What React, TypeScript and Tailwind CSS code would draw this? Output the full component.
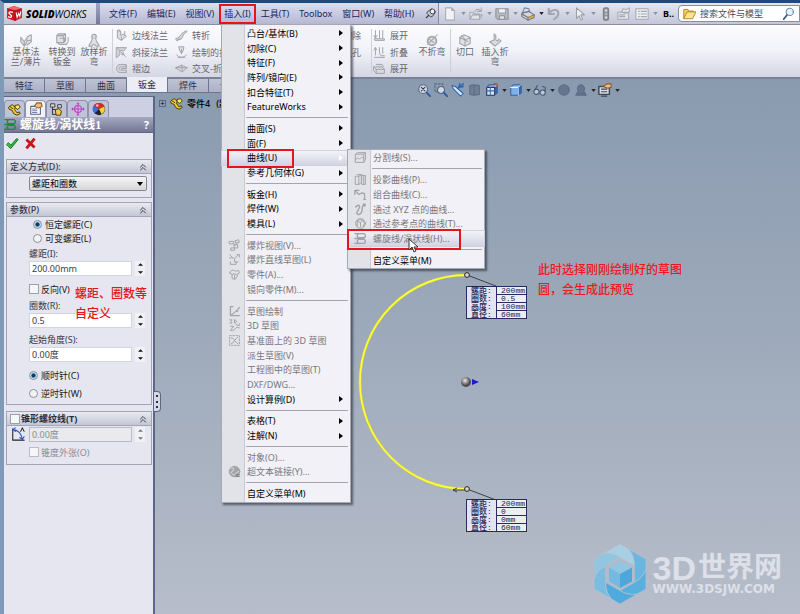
import type { ReactNode } from "react";
import clsx from "clsx";

type MenuEntry = {
  label?: string;
  arrow?: boolean;
  disabled?: boolean;
  active?: boolean;
  icon?: ReactNode;
};

const Glyph = ({ children, className }: { children: ReactNode; className?: string }) => (
  <svg
    viewBox="0 0 16 16"
    aria-hidden="true"
    className={clsx("shrink-0", className ?? "size-[13px]")}
    fill="none"
    stroke="currentColor"
    strokeWidth="1.2"
    strokeLinecap="round"
    strokeLinejoin="round"
  >
    {children}
  </svg>
);

/* ---------- ribbon glyphs ---------- */

const BaseFlange = () => (
  <Glyph className="size-[14px]">
    <path d="M2 5l4 5v5L2 10zM6 10l4-6v5l-4 6" fill="#dcdde2" />
    <path d="M10 4l4-2v8l-5 4M9 9l5-1" fill="#e6e7eb" />
  </Glyph>
);
const ConvertMetal = () => (
  <Glyph className="size-[14px]">
    <path d="M2 3h8v8H2zM2 3l2-2h8l-2 2M12 1v8l-2 2" fill="#e0e1e6" />
    <path d="M5 13h8l2-3v-5M5 13l-2-2M6 6h5v4" />
  </Glyph>
);
const LoftBend = () => (
  <Glyph className="size-[14px]">
    <circle cx="8" cy="4" r="2.6" fill="#d8d9de" />
    <path d="M6 6c0 4-2 4-4 9h4c1-3 3-3 4 0h4c-2-5-4-5-4-9" fill="#e0e1e6" />
  </Glyph>
);
const EdgeFlange = () => (
  <Glyph>
    <path d="M3 2v9l5 3 6-5-4-3-3 2V4z" fill="#dddee3" />
    <path d="M3 2l3-1 1 3M8 14v-4M12 3v5" />
  </Glyph>
);
const MiterFlange = () => (
  <Glyph>
    <path d="M2 2h12l-3 4H6v5l-4 3z" fill="#d2d4da" />
    <path d="M2 2l4 4M8 8l5 5M10 8v3M8 10h3" />
  </Glyph>
);
const Hem = () => (
  <Glyph>
    <path d="M13 3H7a5 5 0 0 0 0 10h7v-3H7a2 2 0 0 1 0-4h6z" fill="#d6d8dd" />
    <path d="M13 3l1 2v2M8 8h6" />
  </Glyph>
);
const Jog = () => (
  <Glyph>
    <path d="M1 12l4-2 4-5 5-3 1 1-4 3-3 6-5 2z" fill="#d9dade" />
    <path d="M2 14l4-2" />
  </Glyph>
);
const SketchBend = () => (
  <Glyph>
    <path d="M5 1h6l-1 5-2 3-2-3zM8 4v5" fill="#dfe0e5" />
    <path d="M2 11c3 4 9 4 12 0M4 14h8" />
  </Glyph>
);
const CrossBreak = () => (
  <Glyph>
    <path d="M1 7l7-3 7 3-6 5zM1 7h14M8 4l1 8" fill="#d9dade" />
  </Glyph>
);
const Unfold = () => (
  <Glyph>
    <path d="M3 2v8M1 8l2 3 2-3M8 2v9M12 2v9M7 12h7v2H2v-2z" fill="#e0e1e6" />
  </Glyph>
);
const Fold = () => (
  <Glyph>
    <path d="M3 11V2M1 5l2-3 2 3M8 2v7l2 3h4M12 2v7M2 14h12" />
  </Glyph>
);
const Flatten = () => (
  <Glyph>
    <path d="M1 6h10l3 3v5H4l-3-3zM1 6l3 3h10M4 9v5M4 3h7l2 3" fill="#d9dade" />
  </Glyph>
);
const NoBends = () => (
  <Glyph className="size-[14px]">
    <circle cx="8" cy="9" r="5" fill="#dfe0e5" strokeWidth="2" />
    <path d="M3 13L14 2M5 7l5 4" />
  </Glyph>
);
const Rip = () => (
  <Glyph className="size-[14px]">
    <path d="M2 5l5-3 7 3v7l-6 3-6-3zM2 5l6 3 6-3M8 8v7M4 3l7 7" fill="#dfe0e5" />
  </Glyph>
);
const InsertBends = () => (
  <Glyph className="size-[14px]">
    <path d="M7 1v7l-5 2 6 5 7-6-3-2c0 3-4 2-3-1V3z" fill="#d9dade" />
  </Glyph>
);

/* ---------- menu glyphs ---------- */

const ExplodeView = () => (
  <Glyph>
    <path d="M2 3h5v3H2zM9 2l4-1 1 3-4 1zM8 7h4v4H8zM4 11h4v3H4zM7 6l2 2M11 5v2" />
  </Glyph>
);
const ExplodeLine = () => (
  <Glyph>
    <path d="M2 2l4 4M2 6h4M8 7l5-5M11 2h3v3M8 7v4h4M4 14h6v-3M3 11v3" />
  </Glyph>
);
const PartIcon = () => (
  <Glyph>
    <path d="M2 6c1-4 5-4 7-2l4-1 1 3-3 2M2 6l3 2v5l4 1 3-5-4-2-3 1M8 9v4" />
  </Glyph>
);
const SketchIcon = () => (
  <Glyph>
    <path d="M3 2v11h11M3 2h3M3 13c3-1 4-4 8-6l3-4M10 7l2 1" strokeWidth="1.5" />
  </Glyph>
);
const Sketch3D = () => (
  <Glyph>
    <path d="M2 1h3L4 3l1 2H2M8 1v4h1q3-2 0-4zM3 9h4l-4 5h4l4-4 3 1M10 7l4 1v-2" />
  </Glyph>
);
const PlaneSketch = () => (
  <Glyph>
    <path d="M2 2h12v12H2z" strokeDasharray="2 2" />
    <path d="M4 5c3 0 5 2 3 5M12 4L8 8l4 4M4 12l3-2" />
  </Glyph>
);
const SplitLine = () => (
  <Glyph>
    <path d="M2 4l2-2h10v9l-2 3H2zM2 4h10v10M12 4l2-2M2 11c3-6 4 1 6-2s3 0 4 0" />
  </Glyph>
);
const ProjectCurve = () => (
  <Glyph>
    <path d="M2 4h4v10H2zM6 4l3-2v10l-3 2M10 3h4v11h-4zM4 2h5M12 3v11" />
  </Glyph>
);
const CompositeCurve = () => (
  <Glyph>
    <path d="M1 3v5M1 3h5M1 3l5 5 4-2 3 1v6M10 6l3 1M12 14h2" strokeWidth="1.5" />
  </Glyph>
);
const XyzCurve = () => (
  <Glyph>
    <path d="M2 5c3-4 6-2 4 2s-4 6-1 7 5-3 5-6 0-6 4-6M12 1l2 1-1 2" strokeWidth="1.7" />
  </Glyph>
);
const RefPointCurve = () => (
  <Glyph>
    <circle cx="8" cy="8" r="6" />
    <path d="M4 5l3-2 4 1 2 4-2 4M4 5v6M8 7v5M4 5l4 2 3-3" />
  </Glyph>
);
const HelixIcon = ({ className }: { className?: string }) => (
  <Glyph className={className}>
    <rect x="4" y="2" width="10" height="5" rx="2.5" strokeWidth="1.6" />
    <rect x="4" y="9" width="10" height="5" rx="2.5" strokeWidth="1.6" />
    <path d="M1 2h4M1 8h11M1 14h4" strokeWidth="1.6" />
  </Glyph>
);
const GlobeIcon = () => (
  <Glyph>
    <circle cx="8" cy="8" r="6.5" fill="#a4a4a8" />
    <path d="M4 4c4-2 4 3 1 4s1 4 3 4 2-4 5-4" stroke="#e3e3e8" />
    <path d="M10 12h4M10 14h4" stroke="#777" />
  </Glyph>
);

const SEP: MenuEntry = {};

const insertMenu: MenuEntry[] = [
  { label: "凸台/基体(B)", arrow: true },
  { label: "切除(C)", arrow: true },
  { label: "特征(F)", arrow: true },
  { label: "阵列/镜向(E)", arrow: true },
  { label: "扣合特征(T)", arrow: true },
  { label: "FeatureWorks", arrow: true },
  SEP,
  { label: "曲面(S)", arrow: true },
  { label: "面(F)", arrow: true },
  { label: "曲线(U)", arrow: true, active: true },
  { label: "参考几何体(G)", arrow: true },
  SEP,
  { label: "钣金(H)", arrow: true },
  { label: "焊件(W)", arrow: true },
  { label: "模具(L)", arrow: true },
  SEP,
  { label: "爆炸视图(V)...", disabled: true, icon: <ExplodeView /> },
  { label: "爆炸直线草图(L)", disabled: true, icon: <ExplodeLine /> },
  { label: "零件(A)...", disabled: true, icon: <PartIcon /> },
  { label: "镜向零件(M)...", disabled: true },
  SEP,
  { label: "草图绘制", disabled: true, icon: <SketchIcon /> },
  { label: "3D 草图", disabled: true, icon: <Sketch3D /> },
  { label: "基准面上的 3D 草图", disabled: true, icon: <PlaneSketch /> },
  { label: "派生草图(V)", disabled: true },
  { label: "工程图中的草图(T)", disabled: true },
  { label: "DXF/DWG...", disabled: true },
  { label: "设计算例(D)", arrow: true },
  SEP,
  { label: "表格(T)", arrow: true },
  { label: "注解(N)", arrow: true },
  SEP,
  { label: "对象(O)...", disabled: true },
  { label: "超文本链接(Y)...", disabled: true, icon: <GlobeIcon /> },
  SEP,
  { label: "自定义菜单(M)" },
];

const curveMenu: MenuEntry[] = [
  { label: "分割线(S)...", disabled: true, icon: <SplitLine /> },
  SEP,
  { label: "投影曲线(P)...", disabled: true, icon: <ProjectCurve /> },
  { label: "组合曲线(C)...", disabled: true, icon: <CompositeCurve /> },
  { label: "通过 XYZ 点的曲线...", disabled: true, icon: <XyzCurve /> },
  { label: "通过参考点的曲线(T)...", disabled: true, icon: <RefPointCurve /> },
  { label: "螺旋线/涡状线(H)...", disabled: true, active: true, icon: <HelixIcon /> },
  SEP,
  { label: "自定义菜单(M)" },
];

const Menu = ({ items, className }: { items: MenuEntry[]; className: string }) => (
  <div
    role="menu"
    className={clsx(
      "absolute z-20 flex flex-col border border-[#a9a9b0] bg-[linear-gradient(90deg,#e1e3e9_22px,#c9cad0_22px,#c9cad0_23px,#f2f1f7_23px)] shadow-[2px_2px_2px_rgba(40,45,60,0.65)]",
      className
    )}
  >
    {items.map((item, i) =>
      item.label ? (
        <button
          key={i}
          role="menuitem"
          className={clsx(
            "flex min-h-0 flex-1 items-center text-left whitespace-nowrap",
            item.disabled ? "text-[#77777c]" : "text-black",
            item.active && "bg-linear-to-b from-[#f3f3f8] to-[#d3d4e2] outline outline-[#cfd0dc]"
          )}
        >
          <span className="flex w-[24px] shrink-0 justify-center text-[#a2a3a8]">{item.icon}</span>
          <span className="flex-1 pl-px">{item.label}</span>
          {item.arrow && (
            <svg viewBox="0 0 4 6" className="mr-[7px] h-1.5 w-1" aria-hidden="true">
              <path d="M0 0l4 3-4 3z" fill={item.active ? "#fff" : "#000"} />
            </svg>
          )}
        </button>
      ) : (
        <div key={i} role="separator" className="flex h-[7px] shrink-0 items-center pr-0.5 pl-[24px]">
          <span className="h-px flex-1 bg-[#a5a5aa]" />
        </div>
      )
    )}
  </div>
);

/* ---------- title bar ---------- */

const Caret = ({ dark }: { dark?: boolean }) => (
  <svg viewBox="0 0 6 4" className="h-[3px] w-[5px] shrink-0" aria-hidden="true">
    <path d="M0 0h6L3 4z" fill={dark ? "#26262c" : "#8d8f99"} />
  </svg>
);

const quickTools: { name: string; caret?: boolean; dark?: boolean; icon: ReactNode }[] = [
  { name: "新建", caret: true, icon: <path d="M3 1h7l3 3v11H3zM10 1v3h3" fill="#f2f2f6" stroke="#a9abb5" /> },
  {
    name: "打开",
    caret: true,
    icon: (
      <>
        <path d="M1 14V6h4l1 2h6v6zM1 14l3-5h11l-3 5z" fill="#e2e3ea" stroke="#a5a7b1" />
        <path d="M7 5c1-3 4-3 6-1M14 1v4h-4" stroke="#a5a7b1" />
      </>
    ),
  },
  {
    name: "保存",
    caret: true,
    icon: (
      <>
        <path d="M1 2h14v12H3l-2-2z" fill="#b9bbc4" stroke="#8d8f99" />
        <path d="M4 2h8v5H4z" fill="#f0f0f4" stroke="#9fa1ab" />
        <path d="M5 10h6v4H5z" fill="#e1e2e8" stroke="#8d8f99" />
      </>
    ),
  },
  {
    name: "打印",
    caret: true,
    dark: true,
    icon: (
      <>
        <path d="M2 6l2-5 5 1 1 4" fill="#cfe3fa" stroke="#7387a5" />
        <path d="M1 7l8-2 6 4v3l-7 3-7-4z" fill="#d6d6db" stroke="#6d6e76" />
        <path d="M1 8l7 4 7-3M8 12v3" stroke="#6d6e76" />
        <path d="M10 12l3-1" stroke="#d9a622" strokeWidth="2" />
      </>
    ),
  },
  {
    name: "撤消",
    caret: true,
    icon: <path d="M2 2v6h6M2 8c3-6 11-6 11-1 0 3-2 5-5 7" stroke="#a3a5b0" strokeWidth="2.4" />,
  },
  {
    name: "选择",
    caret: true,
    icon: <path d="M4 1v12l3-3 2 5 2-1-2-5h4z" fill="#f1f1f5" stroke="#9c9ea8" />,
  },
  {
    name: "重建模型",
    icon: (
      <>
        <rect x="5" y="1" width="6" height="14" rx="2" fill="#909199" stroke="#7c7d85" />
        <circle cx="8" cy="4" r="1.5" fill="#d6d7dc" stroke="none" />
        <circle cx="8" cy="8" r="1.5" fill="#b6b7bd" stroke="none" />
        <circle cx="8" cy="12" r="1.5" fill="#d6d7dc" stroke="none" />
      </>
    ),
  },
  {
    name: "文件属性",
    icon: <path d="M1 6h12v8H1zM5 6l2-4 3 1 4-2v5l-4 1zM3 9h6M3 11h6" fill="#e6e7ec" stroke="#a5a7b1" />,
  },
  {
    name: "选项",
    caret: true,
    icon: <path d="M1 2h14v12H1zM4 5h1M4 8h1M4 11h1M7 5h6M7 8h6M7 11h6" fill="#eeeef3" stroke="#a5a7b1" />,
  },
];

const TitleBar = () => (
  <header className="flex h-[22px] shrink-0 items-stretch overflow-hidden border-b border-[#8a8ca0] bg-linear-to-b from-[#e4e6ef] to-[#c3c6d8]">
    <div className="flex w-[92px] shrink-0 items-center gap-[3px] pl-0.5">
      <svg viewBox="0 0 32 32" className="size-[17px] shrink-0" aria-hidden="true">
        <path d="M2 7l13-5 15 5v17l-13 6-15-5z" fill="#cf1820" />
        <path d="M2 7l13-5 15 5-13 4z" fill="#f0685f" />
        <path d="M17 11v19M2 7l15 4 13-4" stroke="#8d0b12" strokeWidth="1.5" fill="none" />
        <path d="M13 14c-8-3-9 1-5 4s3 7-4 4" stroke="#fff" strokeWidth="2.5" fill="none" />
        <path d="M19 14l2 9 3-7 2 5 2-9" stroke="#fff" strokeWidth="2" fill="none" />
      </svg>
      <span className="font-['Open_Sans','Noto_Sans',sans-serif] text-[10px] text-black italic">
        <b className="font-extrabold">SOLID</b>
        <span className="font-medium">WORKS</span>
      </span>
    </div>
    <div className="w-1 shrink-0 bg-linear-to-b from-[#a3a6c2] to-[#74779a]" />
    <nav className="flex w-[339px] shrink-0 items-center border-r border-[#8a8ca0] bg-linear-to-b from-[#dcdeef] to-[#b4b8d2] pl-1 text-[#1d1f5c]">
      {["文件(F)", "编辑(E)", "视图(V)", "插入(I)", "工具(T)", "Toolbox", "窗口(W)", "帮助(H)"].map((name) => (
        <button
          key={name}
          className={clsx(
            "mx-px h-[18px] px-1 whitespace-nowrap",
            name === "插入(I)" && "outline-2 -outline-offset-1 outline-[#e5141e]"
          )}
        >
          {name}
        </button>
      ))}
      <button aria-label="固定" className="ml-1.5">
        <Glyph className="size-[11px]">
          <path d="M2 14l4-4" stroke="#33343c" strokeWidth="2" />
          <path d="M3 8l5 5 3-1 4-6-5-5-6 4z" fill="#c2c4ce" stroke="#33343c" />
          <circle cx="11" cy="5" r="3.5" fill="#f1f1f5" stroke="#33343c" />
        </Glyph>
      </button>
    </nav>
    <div className="flex min-w-0 flex-1 items-center pl-1">
      {quickTools.map((tool) => (
        <button
          key={tool.name}
          aria-label={tool.name}
          className={clsx("flex shrink-0 items-center gap-1", tool.caret ? "w-[26px]" : "w-[18px]")}
        >
          <Glyph className="size-[14px]">{tool.icon}</Glyph>
          {tool.caret && <Caret dark={tool.dark} />}
        </button>
      ))}
      <span className="px-0.5 font-bold text-black">B..</span>
      <label className="ml-auto flex h-[17px] w-[122px] shrink-0 items-center gap-1 rounded-l-sm border border-[#8a8ca0] bg-white pr-1 pl-1">
        <Glyph className="size-[13px]">
          <path d="M1 14V3h5l1 2h6v3" fill="#f6d36a" stroke="#b8861b" />
          <path d="M1 14l4-8h11l-4 8z" fill="#fbe58e" stroke="#b8861b" />
        </Glyph>
        <input
          aria-label="搜索文件与模型"
          placeholder="搜索文件与模型"
          className="min-w-0 flex-1 bg-transparent outline-none placeholder:text-[#4c4d55]"
        />
        <Glyph className="size-[13px]">
          <circle cx="9.5" cy="6" r="4.5" fill="#e7f1fb" stroke="#5c7fae" />
          <path d="M6 10l-4 5" stroke="#39557f" strokeWidth="2" />
        </Glyph>
      </label>
    </div>
  </header>
);

/* ---------- ribbon ---------- */

const BigTool = ({ icon, label, className }: { icon: ReactNode; label: string; className: string }) => (
  <button className={clsx("flex shrink-0 flex-col items-center pt-2 text-[#66676e]", className)}>
    <span className="text-[#a2a3ab]">{icon}</span>
    <span className="text-center leading-[10px] whitespace-pre-line">{label}</span>
  </button>
);

const ToolColumn = ({ tools, className }: { tools: { label: string; icon?: ReactNode }[]; className: string }) => (
  <div className={clsx("flex shrink-0 flex-col pt-0.5", className)}>
    {tools.map((tool, i) => (
      <button key={i} className="flex h-[17px] items-center gap-1 whitespace-nowrap text-[#66676e]">
        <span className="w-[13px] text-[#a2a3ab]">{tool.icon}</span>
        {tool.label}
      </button>
    ))}
  </div>
);

const RibbonSeparator = () => <span className="mt-1 h-11 w-px shrink-0 bg-[#cdcfd9]" />;

const Ribbon = () => (
  <div className="flex h-[54px] shrink-0 overflow-hidden border-b-2 border-[#7b8196] bg-linear-to-b from-[#fcfcfe] via-[#f1f2f8] to-[#d4d6e3]">
    <BigTool className="w-11" icon={<BaseFlange />} label={"基体法\n兰/薄片"} />
    <BigTool className="w-7" icon={<ConvertMetal />} label={"转换到\n钣金"} />
    <BigTool className="w-9" icon={<LoftBend />} label={"放样折\n弯"} />
    <RibbonSeparator />
    <ToolColumn
      className="w-[62px] pl-0.5"
      tools={[
        { label: "边线法兰", icon: <EdgeFlange /> },
        { label: "斜接法兰", icon: <MiterFlange /> },
        { label: "褶边", icon: <Hem /> },
      ]}
    />
    <ToolColumn
      className="w-[133px]"
      tools={[
        { label: "转折", icon: <Jog /> },
        { label: "绘制的折弯", icon: <SketchBend /> },
        { label: "交叉-折断", icon: <CrossBreak /> },
      ]}
    />
    <ToolColumn className="w-[63px]" tools={[{ label: "拉伸切除" }, { label: "简单直孔" }]} />
    <RibbonSeparator />
    <ToolColumn
      className="w-[42px] pl-px"
      tools={[
        { label: "展开", icon: <Unfold /> },
        { label: "折叠", icon: <Fold /> },
        { label: "展开", icon: <Flatten /> },
      ]}
    />
    <BigTool className="w-9" icon={<NoBends />} label="不折弯" />
    <RibbonSeparator />
    <BigTool className="w-7" icon={<Rip />} label="切口" />
    <BigTool className="w-8" icon={<InsertBends />} label={"插入折\n弯"} />
  </div>
);

/* ---------- property panel ---------- */

const TreeParts = () => (
  <Glyph className="size-[13px]">
    <path d="M1 5l4-3 4 3-1 3 3 4 3-1 1 2-4 2-4-2-2-4-3-1z" fill="#f3cf27" stroke="#4d3d06" />
    <path d="M9 3l4-1 2 3-3 3-3-2z" fill="#fae86b" stroke="#4d3d06" />
    <path d="M3 5l3 2" stroke="#4d3d06" />
  </Glyph>
);

const panelTabs: { name: string; icon: ReactNode }[] = [
  { name: "设计树", icon: <TreeParts /> },
  {
    name: "属性",
    icon: (
      <Glyph className="size-[14px]">
        <path d="M2 5h11v9H2z" fill="#fff" stroke="#5a5f75" />
        <path d="M4 8h5M4 10h5M4 12h5" stroke="#7080b0" />
        <path d="M6 5l3-4h5l1 4-4 2z" fill="#f3bd7c" stroke="#8a5a24" />
      </Glyph>
    ),
  },
  {
    name: "配置",
    icon: (
      <Glyph className="size-[13px]">
        <path d="M3 1v13h4M3 8h3" stroke="#333" />
        <path d="M1 1h5v4H1zM10 2h4v4h-4z" fill="#d5d7e0" stroke="#444" />
        <path d="M7 8l4-1 3 3-1 5H8z" fill="#f0cf3e" stroke="#4d3d06" />
      </Glyph>
    ),
  },
  {
    name: "尺寸",
    icon: (
      <Glyph className="size-[14px]">
        <circle cx="8" cy="8" r="4" stroke="#c440c4" />
        <path d="M8 1v14M1 8h14M7 2l1-1 1 1M7 14l1 1 1-1M2 7L1 8l1 1M14 7l1 1-1 1" stroke="#c440c4" />
      </Glyph>
    ),
  },
  {
    name: "外观",
    icon: (
      <Glyph className="size-[14px]">
        <g stroke="none">
          <circle cx="8" cy="8" r="7" fill="#24242c" />
          <path d="M8 8L2 4a7 7 0 0 1 12 1z" fill="#e3262a" />
          <path d="M8 8l6-3a7 7 0 0 1-3 9z" fill="#f3d22c" />
          <path d="M8 8L2 4a7 7 0 0 0 1 9z" fill="#3f72d0" />
          <circle cx="6" cy="4" r="1.5" fill="#fff" opacity=".7" />
        </g>
      </Glyph>
    ),
  },
];

const Group = ({
  title,
  checkable,
  className,
  children,
}: {
  title: string;
  checkable?: boolean;
  className?: string;
  children: ReactNode;
}) => (
  <section className={clsx("mr-px ml-0.5 border border-[#a1a5b6]", className)}>
    <div className="flex h-[14px] items-center justify-between border-b border-[#a1a5b6] bg-linear-to-b from-[#e9eaf1] to-[#c3c6d4] pr-1 pl-[3px]">
      {checkable ? (
        <label className="flex items-center gap-px font-bold text-[#2b2d3c]">
          <input type="checkbox" className="size-[10px] appearance-none border border-[#9ea0aa] bg-[#f6f6f9]" />
          {title}
        </label>
      ) : (
        <h2 className="font-medium text-[#34364a]">{title}</h2>
      )}
      <button aria-label="折叠">
        <Glyph className="size-2">
          <path d="M3 8l5-5 5 5M3 14l5-5 5 5" stroke="#2b2d3c" strokeWidth="1.8" />
        </Glyph>
      </button>
    </div>
    {children}
  </section>
);

const Radio = ({
  name,
  label,
  checked,
  className,
}: {
  name: string;
  label: string;
  checked?: boolean;
  className?: string;
}) => (
  <label className={clsx("flex h-[14px] items-center gap-[3px] text-[#1a1a20]", className)}>
    <input
      type="radio"
      name={name}
      defaultChecked={checked}
      className="size-[9px] appearance-none rounded-full border border-[#8e9099] bg-[#f3f3f6] checked:bg-[radial-gradient(circle,#0d3e66_35%,#b9dcf3_50%)]"
    />
    {label}
  </label>
);

const Spin = ({ id, value, disabled }: { id: string; value: string; disabled?: boolean }) => (
  <div className="flex h-[15px] items-stretch gap-[3px]">
    <input
      id={id}
      aria-label={disabled ? "锥度" : undefined}
      defaultValue={value}
      disabled={disabled}
      className={clsx(
        "w-[103px] border px-0.5 outline-none",
        disabled
          ? "border-[#b9bbc6] bg-[#e9e9ee] text-[#8c8c92]"
          : "border-[#d3d5de] bg-white text-[#3c3d44]"
      )}
    />
    <span className="flex w-[10px] flex-col bg-[#f1f1f5]">
      <button aria-label="增加" className="flex flex-1 items-center justify-center">
        <svg viewBox="0 0 6 3" className="h-[3px] w-[5px]">
          <path d="M0 3h6L3 0z" fill={disabled ? "#77777c" : "#111"} />
        </svg>
      </button>
      <button aria-label="减少" className="flex flex-1 items-center justify-center">
        <svg viewBox="0 0 6 3" className="h-[3px] w-[5px]">
          <path d="M0 0h6L3 3z" fill={disabled ? "#77777c" : "#111"} />
        </svg>
      </button>
    </span>
  </div>
);

const PropertyPanel = () => (
  <aside className="relative mt-[3px] w-[151px] shrink-0 border-t border-r-2 border-[#5c6788] bg-[#e5e6f0]">
    <div className="flex h-5 items-end bg-[#cdd0e2] pt-[3px]">
      {panelTabs.map((tab, i) => (
        <button
          key={tab.name}
          aria-label={tab.name}
          className={clsx(
            "flex h-[17px] w-[21px] items-center justify-center rounded-t-sm border border-b-0 border-[#8e93ab]",
            i === 1 ? "bg-[#f1f2f8]" : "bg-[#bfc3d8]"
          )}
        >
          {tab.icon}
        </button>
      ))}
    </div>
    <div className="flex h-4 items-center gap-[3px] border-b border-[#62667f] bg-linear-to-b from-[#a7a9c1] to-[#737693] pr-1 text-white">
      <span className="text-[#149336]">
        <HelixIcon className="size-[13px]" />
      </span>
      <h1 className="flex-1 font-['Liberation_Serif','Noto_Sans_CJK_SC',serif] text-[12px] font-bold whitespace-nowrap">
        螺旋线/涡状线1
      </h1>
      <button aria-label="帮助" className="text-[11px] font-bold">
        ?
      </button>
    </div>
    <div className="flex h-[26px] items-start gap-[5px] pt-1 pl-0.5">
      <button aria-label="确定">
        <Glyph className="size-[13px]">
          <path d="M1 9l2-2 3 3 7-8 2 1-9 11z" fill="#39b54a" stroke="#15742a" />
        </Glyph>
      </button>
      <button aria-label="取消">
        <Glyph className="size-[13px]">
          <path d="M3 3l10 10M13 2L3 14" stroke="#c5161c" strokeWidth="3.5" strokeLinecap="butt" />
        </Glyph>
      </button>
    </div>

    <Group title="定义方式(D):" className="pb-[6px]">
      <div className="relative mt-0.5 mr-1 ml-[22px]">
        <select
          aria-label="定义方式"
          className="h-[15px] w-full appearance-none rounded-xs border border-[#85868e] bg-linear-to-b from-[#f6f6f6] to-[#d6d6d9] pl-0.5 text-black"
        >
          <option>螺距和圈数</option>
        </select>
        <svg viewBox="0 0 6 4" className="pointer-events-none absolute top-[6px] right-1 h-1 w-1.5">
          <path d="M0 0h6L3 4z" fill="#000" />
        </svg>
      </div>
    </Group>

    <Group title="参数(P)" className="mt-1">
      <div className="flex flex-col pb-1 pl-[22px] text-[#34364a]">
        <Radio name="pitch" label="恒定螺距(C)" checked className="pl-1" />
        <Radio name="pitch" label="可变螺距(L)" className="pl-1" />
        <label htmlFor="pitch-value" className="mt-0.5 leading-[14px]">
          螺距(I):
        </label>
        <Spin id="pitch-value" value="200.00mm" />
        <label className="mt-[5px] flex h-4 items-center gap-0.5 text-[#1a1a20]">
          <input type="checkbox" className="size-[10px] appearance-none border border-[#9ea0aa] bg-[#f6f6f9]" />
          反向(V)
        </label>
        <label htmlFor="turns" className="mt-0.5 leading-[14px]">
          圈数(R):
        </label>
        <Spin id="turns" value="0.5" />
        <label htmlFor="start-angle" className="mt-[5px] leading-[14px]">
          起始角度(S):
        </label>
        <Spin id="start-angle" value="0.00度" />
        <Radio name="direction" label="顺时针(C)" checked className="mt-[6px]" />
        <Radio name="direction" label="逆时针(W)" className="mt-1" />
      </div>
    </Group>

    <Group title="锥形螺纹线(T)" checkable className="mt-[6px]">
      <div className="flex gap-1 pt-px pb-1 pl-1">
        <Glyph className="size-[14px]">
          <path d="M2 15V2M2 15h13" stroke="#222" />
          <path d="M2 3c6 0 10 5 11 11M2 3l3-2M2 3l3 2M13 14l2-3M13 14l-3-2" stroke="#2850c8" />
          <path d="M11 5l2-4 2 4" stroke="#222" />
        </Glyph>
        <div>
          <Spin id="taper" value="0.00度" disabled />
          <label className="mt-0.5 flex h-4 items-center gap-0.5 text-[#8c8c92]">
            <input
              type="checkbox"
              disabled
              className="size-[10px] appearance-none border border-[#b9bbc6] bg-[#f6f6f9]"
            />
            锥度外张(O)
          </label>
        </div>
      </div>
    </Group>

    <p className="absolute top-[187px] left-[71px] text-[12px] leading-5 font-medium whitespace-nowrap text-[#e5141e]">
      螺距、圈数等
      <br />
      自定义
    </p>
    <button
      aria-label="收起面板"
      className="absolute top-[294px] -right-2 flex h-[21px] w-[7px] flex-col items-center justify-evenly rounded-r-sm border border-l-0 border-[#5c6788] bg-[#d6d8e6]"
    >
      {[0, 1, 2].map((i) => (
        <span key={i} className="size-[2px] bg-[#2b2d5c]" />
      ))}
    </button>
  </aside>
);

/* ---------- graphics area ---------- */

const Cube = () => (
  <>
    <path d="M2 5l3-3h9v9l-3 3H2z" fill="#7fb0ea" stroke="#3b5f98" />
    <path d="M2 5h9v9M11 5l3-3" stroke="#e5f0ff" />
    <path d="M11 5l3-3v9l-3 3z" fill="#3465b2" stroke="none" />
  </>
);

const viewTools: { name: string; caret?: boolean; icon: ReactNode }[] = [
  {
    name: "整屏显示",
    icon: (
      <>
        <circle cx="7" cy="7" r="5" fill="#ccd8e6" stroke="#56657c" />
        <path d="M11 11l4 4" stroke="#2f5aa8" strokeWidth="2.4" />
        <path d="M5 5l4 4M9 5L5 9" stroke="#2d3850" />
      </>
    ),
  },
  {
    name: "局部放大",
    icon: (
      <>
        <path d="M1 1h9v9H1z" strokeDasharray="2 2" stroke="#56657c" />
        <circle cx="8" cy="8" r="4" fill="#ccd8e6" stroke="#56657c" />
        <path d="M11 11l4 4" stroke="#2f5aa8" strokeWidth="2.4" />
      </>
    ),
  },
  {
    name: "上一视图",
    icon: (
      <>
        <path d="M1 3l4 1 9 8-3 3-8-8z" fill="#d5e7fa" stroke="#2f68b0" />
        <path d="M8 6l6-5M10 1l-1 4 5-1" stroke="#2f68b0" strokeWidth="1.8" />
      </>
    ),
  },
  {
    name: "剖面视图",
    icon: <path d="M2 3l5-1v12l-5-1zM7 2l6 1v10l-6 1" fill="#6d7e96" stroke="#5c6c84" />,
  },
  {
    name: "视图定向",
    caret: true,
    icon: (
      <>
        <Cube />
        <path d="M2 5h9v9H2z" fill="#d8e6f7" stroke="#213a66" />
        <path d="M2 9h9M6 5v9M2 5l3-3" stroke="#3f68a6" />
        <path d="M10 1h4v3" stroke="#d53c32" />
      </>
    ),
  },
  { name: "显示样式", caret: true, icon: <Cube /> },
  {
    name: "隐藏/显示",
    caret: true,
    icon: (
      <>
        <circle cx="4" cy="10" r="3" fill="#b9c7d8" stroke="#46556e" />
        <circle cx="11" cy="11" r="3" fill="#b9c7d8" stroke="#46556e" />
        <path d="M2 8l3-5M14 9V5l-3-1" stroke="#46556e" />
      </>
    ),
  },
  { name: "编辑外观", icon: <circle cx="8" cy="8" r="6" fill="#66768e" stroke="#5c6c84" /> },
  {
    name: "应用布景",
    caret: true,
    icon: <path d="M5 9a4 4 0 1 1 6 0l3 5H2zM4 12h8" fill="#66768e" stroke="#5c6c84" />,
  },
  {
    name: "视图设定",
    caret: true,
    icon: (
      <>
        <path d="M1 4h12v9H1z" fill="#d9dfe6" stroke="#3d4555" strokeWidth="1.6" />
        <path d="M4 15h6M4 7h6M4 10h6" stroke="#3d4555" />
        <path d="M6 4l4-3h5v4l-4 1z" fill="#f3bd7c" stroke="#8a5a24" />
      </>
    ),
  },
];

const Callout = ({ values, className }: { values: string[]; className: string }) => (
  <table
    className={clsx(
      "absolute w-[61px] border-collapse border border-[#2a2a63] font-['Liberation_Mono','Noto_Sans_CJK_SC',monospace] text-[8px] leading-[7px] text-[#1b1b4f]",
      className
    )}
  >
    <tbody>
      {["螺距:", "圈数:", "高度:", "直径:"].map((label, i) => (
        <tr key={label}>
          <th className="w-[30px] border-x border-[#2a2a63] bg-[#e2e4f0] p-0 text-center font-medium">{label}</th>
          <td className="border border-[#2a2a63] bg-[#eceef7] py-0 pr-0 pl-1">{values[i]}</td>
        </tr>
      ))}
    </tbody>
  </table>
);

const blades = ["#a9cfe3", "#6ab6e0", "#58b0de", "#4fabdd", "#7bbce0", "#92c5e0"];

const Watermark = () => (
  <div className="absolute right-[18px] bottom-[9px] flex items-center gap-1.5 text-[#dde0e8]">
    <svg viewBox="-27 -31 54 62" className="h-[62px] w-[54px]" aria-hidden="true">
      {blades.map((fill, i) => (
        <path
          key={fill}
          d="M-17 -20.2L0 -30L9 -24.8Q15 -17 14.4 -8.3L0 -16.6Q-7.2 -21.5 -17 -20.2Z"
          fill={fill}
          stroke="#b7bfcd"
          strokeWidth="0.7"
          transform={`rotate(${i * 60})`}
        />
      ))}
      <path d="M0 -13L12 -6.5L0 0L-11 -6.5Z" fill="#90c6e2" />
      <path d="M-11 -6.5L0 0V14L-11 7Z" fill="#74b9df" />
      <path d="M12 -6.5L0 0V14L12 7.5Z" fill="#4ea7da" />
    </svg>
    <div>
      <p className="flex items-center font-['Liberation_Sans','Noto_Sans_CJK_SC',sans-serif] text-[28px] leading-[30px] font-bold">
        <span className="mr-0.5 text-[34px]">3D</span>世界网
      </p>
      <p className="font-['DejaVu_Sans',sans-serif] text-[12px] leading-3 font-bold">WWW.3DSJW.COM</p>
    </div>
  </div>
);

const Viewport = () => (
  <main className="relative min-w-0 flex-1">
    <div className="flex items-center gap-1 pt-1 pl-1 font-medium text-black">
      <button aria-label="展开零件" className="flex size-[7px] items-center justify-center border border-[#5c6788] text-[7px]">
        +
      </button>
      <TreeParts />
      <span>零件4</span>
      <span className="pl-0.5">(默认)</span>
    </div>

    <div className="absolute -top-[10px] left-[262px] flex items-center">
      {viewTools.map((tool) => (
        <button
          key={tool.name}
          aria-label={tool.name}
          className={clsx("flex shrink-0 items-center gap-[3px]", tool.caret ? "w-[24px]" : "w-[17px]")}
        >
          <Glyph className="size-[14px]">{tool.icon}</Glyph>
          {tool.caret && <Caret dark />}
        </button>
      ))}
    </div>

    <svg
      viewBox="155 92 645 522"
      className="pointer-events-none absolute top-0 left-0 h-[522px] w-[645px]"
      fill="none"
      aria-hidden="true"
    >
      <defs>
        <radialGradient id="origin" cx=".4" cy=".35">
          <stop offset="0" stopColor="#e8e8e8" />
          <stop offset="1" stopColor="#4c4c4c" />
        </radialGradient>
      </defs>
      <path d="M466.500 274A106.500 107 0 0 0 466.500 488" stroke="#d9d93a" strokeWidth="2.6" />
      <path d="M466.500 274A106.500 107 0 0 0 466.500 488" stroke="#ffff3c" strokeWidth="1.4" />
      <path d="M467 274l29 11M467 488l29 11M453 489h12M453 489l4-2M453 489l4 2" stroke="#33353c" strokeWidth=".9" />
      <circle cx="467" cy="274" r="2.4" fill="#d6d6bc" stroke="#26262c" />
      <circle cx="467" cy="488" r="2.4" fill="#d6d6bc" stroke="#26262c" />
      <circle cx="466" cy="381" r="5" fill="url(#origin)" />
      <path d="M472 378l7 3-7 3z" fill="#1a1ad6" />
    </svg>

    <Callout className="top-[193px] left-[311px]" values={["200mm", "0.5", "100mm", "60mm"]} />
    <Callout className="top-[406px] left-[311px]" values={["200mm", "0", "0mm", "60mm"]} />

    <p className="absolute top-[167px] left-[383px] text-[12px] leading-5 font-medium whitespace-nowrap text-[#f01820]">
      此时选择刚刚绘制好的草图
      <br />
      圆，会生成此预览
    </p>
    <Watermark />
  </main>
);

export default function App() {
  return (
    <div
      lang="zh-CN"
      className="relative flex min-h-screen flex-col overflow-hidden border-t-[3px] border-l-4 border-t-[#1d4a7c] border-l-[#7f9ab8] bg-linear-to-b from-[#8496ad] via-[#9ba8b9] to-[#b7bdca] font-['Noto_Sans','Noto_Sans_CJK_SC',sans-serif] text-[9px] leading-none"
    >
      <TitleBar />
      <Ribbon />
      <div className="flex h-[14px] shrink-0" role="tablist">
        {["特征", "草图", "曲面", "钣金", "焊件", "评估"].map((tab) => (
          <button
            key={tab}
            role="tab"
            aria-selected={tab === "钣金"}
            className={clsx(
              "w-[41px] border-r border-b border-[#6f7590] text-[#2f3142]",
              tab === "钣金" ? "-mt-0.5 bg-[#eceef6]" : "bg-linear-to-b from-[#bfc3d4] to-[#abb0c6]"
            )}
          >
            {tab}
          </button>
        ))}
      </div>
      <div className="flex flex-1">
        <PropertyPanel />
        <Viewport />
      </div>

      <Menu items={insertMenu} className="top-[21px] left-[217px] h-[479px] w-[130px] pt-px pb-px" />
      <Menu items={curveMenu} className="top-[146px] left-[343px] h-[120px] w-[138px]" />

      {/* call-out frames over the menus */}
      <span className="pointer-events-none absolute top-[146px] left-[223px] z-30 h-[19px] w-[67px] border-2 border-[#e5141e]" />
      <span className="pointer-events-none absolute top-[226px] left-[343px] z-30 h-[21px] w-[114px] border-2 border-[#e5141e]" />
      <svg
        viewBox="0 0 10 15"
        aria-hidden="true"
        className="pointer-events-none absolute top-[235px] left-[404px] z-30 h-[15px] w-[10px]"
      >
        <path d="M1 1v11l3-3 2 5 2-1-2-4h4z" fill="#fff" stroke="#33343c" />
      </svg>
    </div>
  );
}
